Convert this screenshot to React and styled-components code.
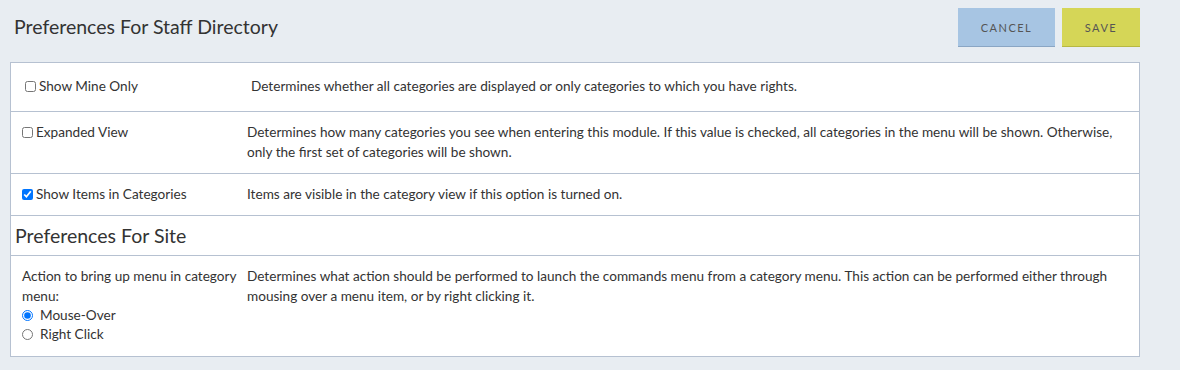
import React from "react";
import styled, { createGlobalStyle } from "styled-components";

const Global = createGlobalStyle`
  html, body { margin: 0; padding: 0; background: #e8edf2; }
  body { font-family: "Lato", "Noto Sans", sans-serif; color: #333; }
`;

const Page = styled.div`
  width: 1130px;
  padding: 8px 0 14px 10px;
`;

const Header = styled.div`
  display: flex;
  align-items: center;
  justify-content: space-between;
  height: 39px;
  margin-bottom: 15px;
`;

const Title = styled.h1`
  margin: 0 0 0 4px;
  font-size: 19.5px;
  font-weight: 400;
  color: #333;
  position: relative;
  top: -1px;
`;

const Actions = styled.div`
  display: flex;
  gap: 7px;
  height: 39px;
`;

const Button = styled.button`
  width: ${(p) => p.$w}px;
  height: 39px;
  border: none;
  border-bottom: 1px solid ${(p) => p.$edge};
  background: ${(p) => p.$bg};
  color: #555;
  font-family: inherit;
  font-size: 11px;
  letter-spacing: 1.5px;
  text-transform: uppercase;
  padding: 0;
  cursor: pointer;
`;

const Panel = styled.div`
  background: #fff;
  border: 1px solid #b6c1d1;
`;

const Row = styled.div`
  display: grid;
  grid-template-columns: ${(p) => (p.$first ? "226px 1fr" : "225px 1fr")};
  padding: ${(p) => p.$pad};
  padding-left: ${(p) => (p.$first ? "14px" : "11px")};
  padding-right: 12px;
  border-top: ${(p) => (p.$first ? "none" : "1px solid #b6c1d1")};
  font-size: 13.6px;
  line-height: 20px;
`;

const Label = styled.label`
  display: flex;
  align-items: center;
  align-self: ${(p) => (p.$top ? "start" : "center")};
  gap: 3px;
`;

const LabelBlock = styled.div`
  display: flex;
  flex-direction: column;
  padding-right: 6px;
`;

const Option = styled.label`
  display: flex;
  align-items: center;
  gap: 7px;
  line-height: 19px;
`;

const Check = styled.input`
  margin: 0;
  width: 11px;
  height: 11px;
`;

const Radio = styled.input`
  margin: 0;
  width: 11px;
  height: 11px;
`;

const Desc = styled.div`
  padding-right: 4px;
`;

const SectionTitle = styled.div`
  border-top: 1px solid #b6c1d1;
  padding: 0 0 0 4px;
  height: 39px;
  display: flex;
  align-items: center;
  font-size: 19.5px;
  color: #333;
`;

export default function App() {
  return (
    <>
      <Global />
      <Page>
        <Header>
          <Title>Preferences For Staff Directory</Title>
          <Actions>
            <Button $w={97} $bg="#a7c5e3" $edge="#8aa6c4">Cancel</Button>
            <Button $w={78} $bg="#d5d657" $edge="#b7b843">Save</Button>
          </Actions>
        </Header>
        <Panel>
          <Row $first $pad="13px 0 15px">
            <Label>
              <Check type="checkbox" />
              Show Mine Only
            </Label>
            <Desc>Determines whether all categories are displayed or only categories to which you have rights.</Desc>
          </Row>
          <Row $pad="10px 0 11px">
            <Label $top>
              <Check type="checkbox" />
              Expanded View
            </Label>
            <Desc>
              Determines how many categories you see when entering this module. If this value is checked, all categories in the menu will be shown. Otherwise, only the first set of categories will be shown.
            </Desc>
          </Row>
          <Row $pad="10px 0 11px">
            <Label>
              <Check type="checkbox" defaultChecked />
              Show Items in Categories
            </Label>
            <Desc>Items are visible in the category view if this option is turned on.</Desc>
          </Row>
          <SectionTitle>Preferences For Site</SectionTitle>
          <Row $pad="10px 0 12px">
            <LabelBlock>
              <span>Action to bring up menu in category menu:</span>
              <Option>
                <Radio type="radio" name="act" defaultChecked />
                Mouse-Over
              </Option>
              <Option>
                <Radio type="radio" name="act" />
                Right Click
              </Option>
            </LabelBlock>
            <Desc>
              Determines what action should be performed to launch the commands menu from a category menu. This action can be performed either through mousing over a menu item, or by right clicking it.
            </Desc>
          </Row>
        </Panel>
      </Page>
    </>
  );
}
